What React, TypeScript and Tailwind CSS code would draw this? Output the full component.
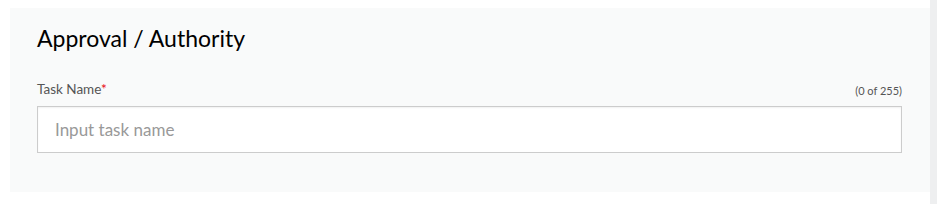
import React from 'react';

export default function App() {
  const [taskName, setTaskName] = React.useState('');

  return (
    <div className="h-[204px] w-[937px] bg-white flex font-['Lato',sans-serif]">
      <div className="mt-2 ml-[10px] h-[184px] w-[920px] bg-[#f9fafa] px-[27px] pt-[14px]">
        <h2 className="text-[23px] leading-[32px] text-black">Approval / Authority</h2>

        <div className="mt-[26px] flex items-end justify-between pr-[1px]">
          <label className="text-[13.5px] leading-[18px] text-[#555]">
            Task Name<span className="text-red-600">*</span>
          </label>
          <span className="text-[11px] leading-[14px] text-[#555]">({taskName.length} of 255)</span>
        </div>

        <input
          value={taskName}
          onChange={(e) => setTaskName(e.target.value)}
          maxLength={255}
          placeholder="Input task name"
          className="mt-[8px] h-[47px] w-[865px] border border-[#cccccc] bg-white px-[17px] text-[17px] text-[#333] shadow-[inset_0_1px_2px_rgba(0,0,0,0.06)] outline-none placeholder:text-[#999]"
        />
      </div>
      <div className="ml-auto h-full w-[7px] bg-[#eeeff0]" />
    </div>
  );
}
